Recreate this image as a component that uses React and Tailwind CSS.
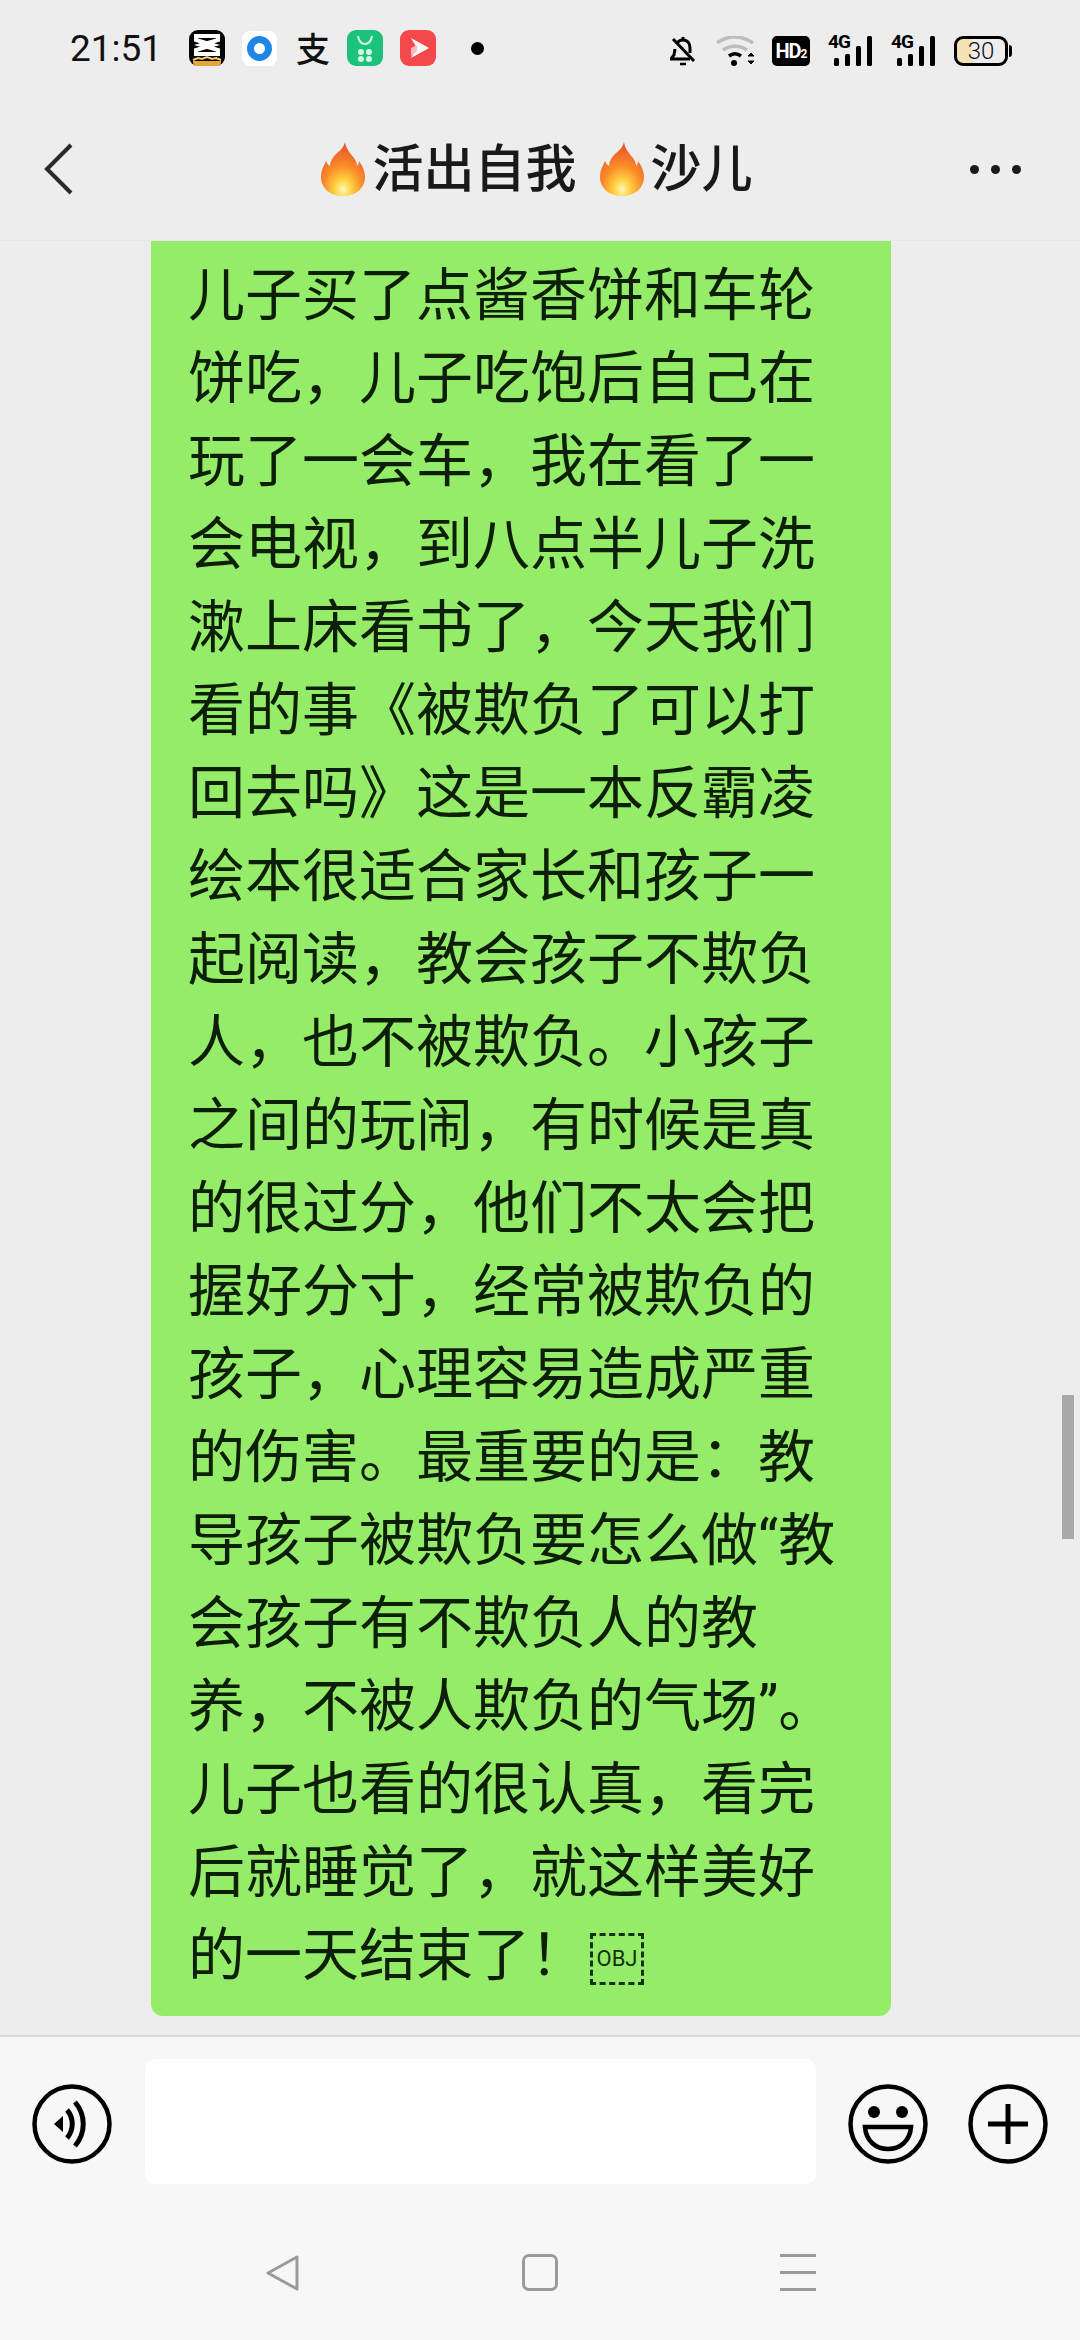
import React from 'react';

const messageLines = [
  '儿子买了点酱香饼和车轮',
  '饼吃，儿子吃饱后自己在',
  '玩了一会车，我在看了一',
  '会电视，到八点半儿子洗',
  '漱上床看书了，今天我们',
  '看的事《被欺负了可以打',
  '回去吗》这是一本反霸凌',
  '绘本很适合家长和孩子一',
  '起阅读，教会孩子不欺负',
  '人，也不被欺负。小孩子',
  '之间的玩闹，有时候是真',
  '的很过分，他们不太会把',
  '握好分寸，经常被欺负的',
  '孩子，心理容易造成严重',
  '的伤害。最重要的是：教',
  '导孩子被欺负要怎么做“教',
  '会孩子有不欺负人的教',
  '养，不被人欺负的气场”。',
  '儿子也看的很认真，看完',
  '后就睡觉了，就这样美好',
];

const FireIcon = ({ id }) => (
  <svg width="44" height="54" viewBox="0 0 44 54" className="shrink-0">
    <defs>
      <radialGradient id={id} cx="50%" cy="88%" r="85%">
        <stop offset="0%" stopColor="#fff6c0" />
        <stop offset="22%" stopColor="#ffd23f" />
        <stop offset="52%" stopColor="#fb8c2a" />
        <stop offset="100%" stopColor="#e8502a" />
      </radialGradient>
    </defs>
    <path
      d="M24 0c1 7 5 11 9 16 2 3 3 5 3 8 1-1 2-3 2-5 4 5 6 11 6 16 0 11-9 19-22 19S0 46 0 35c0-7 3-11 5-16 1 2 2 4 4 5 0-4 2-8 6-12 4-3 8-7 9-12z"
      fill={`url(#${id})`}
    />
  </svg>
);

const CapCutIcon = () => (
  <svg width="36" height="36" viewBox="0 0 36 36">
    <rect width="36" height="36" rx="9" fill="#050505" />
    <path d="M4 31h28v1a4 4 0 0 1-4 4H8a4 4 0 0 1-4-4z" fill="#eaa53a" />
    <path d="M4 30l5-2 4 1 5-2 5 2 4-1 5 2" stroke="#f6cf6a" strokeWidth="2" fill="none" />
    <path d="M7 6h22v4L12 15l17 5v4H7v-4l17-5L7 10z" stroke="#fff" strokeWidth="4" fill="none" />
  </svg>
);

const CircleAppIcon = () => (
  <div className="w-[35px] h-[35px] rounded-[8px] bg-white flex items-center justify-center">
    <div className="w-[25px] h-[25px] rounded-full border-[7px] border-[#1f86e6]" />
  </div>
);

const StoreIcon = () => (
  <svg width="36" height="36" viewBox="0 0 36 36">
    <rect width="36" height="36" rx="9" fill="#1cc27c" />
    <path d="M11 6c1 6 4 8 7 8s6-2 7-8" stroke="#d6f7e6" strokeWidth="2" fill="none" />
    <circle cx="14" cy="22" r="3" fill="#d6f7e6" />
    <circle cx="22" cy="22" r="3" fill="#d6f7e6" />
    <circle cx="14" cy="29" r="3" fill="#d6f7e6" />
    <circle cx="22" cy="29" r="3" fill="#d6f7e6" />
  </svg>
);

const VideoAppIcon = () => (
  <svg width="36" height="36" viewBox="0 0 36 36">
    <rect width="36" height="36" rx="9" fill="#f5484d" />
    <path d="M11 8l18 10-18 10 6-10z" fill="#fff" />
    <path d="M11 18l6-3v6l-6 5z" fill="#fbb9bb" />
  </svg>
);

const MutedBell = () => (
  <svg width="26" height="30" viewBox="0 0 26 30" fill="none" stroke="#000" strokeWidth="3">
    <path d="M13 1v3M7 8c1-3 3-4 6-4 5 0 7 4 7 8v5M5 13l-1 6-3 4h19" />
    <path d="M3 3l21 22" />
    <path d="M10 28h6" strokeWidth="2.5" />
  </svg>
);

const WifiIcon = () => (
  <svg width="40" height="30" viewBox="0 0 40 30" fill="none">
    <path d="M1 7c10-8 25-8 36 0" stroke="#bdbdbd" strokeWidth="3.5" />
    <path d="M7 14c7-5 17-5 24 0" stroke="#bdbdbd" strokeWidth="3.5" />
    <path d="M13 20c4-3 8-3 12 0" stroke="#000" strokeWidth="3.5" />
    <circle cx="18" cy="27" r="3" fill="#000" />
    <path d="M32 20l3-3 3 3z" fill="#000" stroke="#000" />
    <path d="M32 25l3 3 3-3z" fill="#000" stroke="#000" />
  </svg>
);

const NetworkIcon = () => (
  <div className="relative w-[44px] h-[30px]">
    <span className="absolute left-0 top-[-4px] text-[19px] leading-[20px] font-bold text-black [font-family:'Roboto',sans-serif] tracking-[-1px]">
      4G
    </span>
    <svg width="44" height="30" viewBox="0 0 44 30" className="absolute left-0 top-0">
      <rect x="6" y="22" width="5" height="8" rx="1.5" />
      <rect x="17" y="18" width="5" height="12" rx="1.5" />
      <rect x="28" y="10" width="5" height="20" rx="1.5" />
      <rect x="39" y="0" width="5" height="30" rx="1.5" />
    </svg>
  </div>
);

const BatteryIcon = () => (
  <div className="flex items-center">
    <div className="relative w-[54px] h-[30px] rounded-[9px] border-[3px] border-black overflow-hidden flex items-center justify-center bg-[linear-gradient(90deg,#f4e2b4_32%,transparent_32%)]">
      <span className="text-[24px] leading-none font-light text-[#111] [font-family:'Roboto',sans-serif]">30</span>
    </div>
    <div className="w-[3px] h-[12px] ml-[1px] rounded-r-sm bg-black" />
  </div>
);

const StatusBar = () => (
  <div className="h-[96px] flex items-start justify-between pt-[30px] pl-[70px] pr-[68px]">
    <div className="flex items-center h-[36px]">
      <span className="w-[119px] text-[37px] leading-none text-[#111] [font-family:'Roboto',sans-serif]">21:51</span>
      <CapCutIcon />
      <div className="ml-[17px]"><CircleAppIcon /></div>
      <span className="w-[34px] ml-[19px] text-[34px] leading-none font-medium text-[#111] [font-family:'Noto_Sans_CJK_SC',sans-serif]">支</span>
      <div className="ml-[17px]"><StoreIcon /></div>
      <div className="ml-[17px]"><VideoAppIcon /></div>
      <div className="ml-[35px] w-[13px] h-[13px] rounded-full bg-black" />
    </div>
    <div className="flex items-center h-[36px] pt-[6px]">
      <MutedBell />
      <div className="ml-[20px]"><WifiIcon /></div>
      <div className="ml-[16px] w-[38px] h-[30px] rounded-[5px] bg-black flex items-center justify-center text-white font-bold text-[20px] leading-none [font-family:'Roboto',sans-serif] tracking-[-1px]">
        HD<span className="text-[12px] mt-[5px]">2</span>
      </div>
      <div className="ml-[18px]"><NetworkIcon /></div>
      <div className="ml-[19px]"><NetworkIcon /></div>
      <div className="ml-[19px]"><BatteryIcon /></div>
    </div>
  </div>
);

const Header = () => (
  <div className="h-[144px] flex items-center justify-between pl-[44px] pr-[59px] pt-[2px]">
    <svg width="30" height="52" viewBox="0 0 30 52" fill="none" stroke="#2a2a2a" strokeWidth="4">
      <path d="M27 2L3 26l24 24" />
    </svg>
    <div className="flex items-center ml-[30px] text-[51px] leading-none font-medium text-[#191919] whitespace-nowrap [font-family:'Roboto','Noto_Sans_CJK_SC',sans-serif]">
      <FireIcon id="fire-a" />
      <span className="ml-[7px]">活出自我</span>
      <span className="ml-[23px]"><FireIcon id="fire-b" /></span>
      <span className="ml-[7px]">沙儿</span>
    </div>
    <div className="flex gap-[12px]">
      <div className="w-[9px] h-[9px] rounded-full bg-[#1a1a1a]" />
      <div className="w-[9px] h-[9px] rounded-full bg-[#1a1a1a]" />
      <div className="w-[9px] h-[9px] rounded-full bg-[#1a1a1a]" />
    </div>
  </div>
);

const ObjectMark = () => (
  <span className="inline-flex items-center justify-center w-[54px] h-[52px] ml-[3px] mt-[6px] border-[3px] border-dashed border-[#12300a] text-[22px] leading-none text-[#12300a] [font-family:'Roboto',sans-serif]">
    OBJ
  </span>
);

const MessageBubble = () => (
  <div className="ml-[151px] w-[740px] h-[1775px] rounded-b-[12px] bg-[#95ec69] pl-[37px] pt-[13px] text-[57px] leading-[83px] text-[#0e1f08] whitespace-nowrap [font-family:'Roboto','Noto_Sans_CJK_SC',sans-serif]">
    {messageLines.map((line) => (
      <div key={line}>{line}</div>
    ))}
    <div className="flex items-center">
      <span>的一天结束了！</span>
      <ObjectMark />
    </div>
  </div>
);

const InputBar = () => (
  <div className="h-[305px] bg-[#f7f7f7] border-t-2 border-[#d9d9d9]">
    <div className="flex items-center h-[174px] pl-[32px]">
      <svg width="80" height="80" viewBox="0 0 80 80" fill="none" stroke="#000" strokeWidth="4.5" className="shrink-0">
        <circle cx="40" cy="40" r="37.5" />
        <path d="M22 40l9-8v16z" fill="#000" stroke="none" />
        <path d="M35 26c7 8 7 20 0 28" strokeWidth="5" />
        <path d="M43 18c11 13 11 31 0 44" strokeWidth="5" />
      </svg>
      <div className="ml-[33px] mb-[6px] w-[671px] h-[125px] rounded-[10px] bg-white" />
      <svg width="80" height="80" viewBox="0 0 80 80" fill="none" stroke="#000" strokeWidth="4.5" className="ml-[32px] shrink-0">
        <circle cx="40" cy="40" r="37.5" />
        <circle cx="26" cy="28" r="6" fill="#000" stroke="none" />
        <circle cx="54" cy="28" r="6" fill="#000" stroke="none" />
        <path d="M17 43h46c-1 14-11 22-23 22S18 57 17 43z" />
      </svg>
      <svg width="80" height="80" viewBox="0 0 80 80" fill="none" stroke="#000" strokeWidth="4.5" className="ml-[40px] shrink-0">
        <circle cx="40" cy="40" r="37.5" />
        <path d="M40 20v40M20 40h40" strokeWidth="5" />
      </svg>
    </div>
    <div className="flex justify-between items-center pl-[265px] pr-[264px] pt-[43px]">
      <svg width="34" height="36" viewBox="0 0 34 36" fill="none" stroke="#9a9a9a" strokeWidth="3" strokeLinejoin="round">
        <path d="M32 2L3 18l29 16z" />
      </svg>
      <div className="w-[36px] h-[37px] rounded-[7px] border-[3px] border-[#9a9a9a]" />
      <div className="flex flex-col justify-between w-[36px] h-[37px]">
        <div className="h-[3px] bg-[#9a9a9a]" />
        <div className="h-[3px] bg-[#9a9a9a]" />
        <div className="h-[3px] bg-[#9a9a9a]" />
      </div>
    </div>
  </div>
);

export default function App() {
  return (
    <div className="relative w-[1080px] h-[2340px] overflow-hidden bg-[#ededed] flex flex-col">
      <StatusBar />
      <Header />
      <div className="flex-1 min-h-0 overflow-hidden border-t border-[#e6e6e6]">
        <MessageBubble />
      </div>
      <InputBar />
      {/* scroll indicator sits over the chat */}
      <div className="absolute left-[1062px] top-[1395px] w-[12px] h-[144px] bg-[#a9a9a9]" />
    </div>
  );
}
